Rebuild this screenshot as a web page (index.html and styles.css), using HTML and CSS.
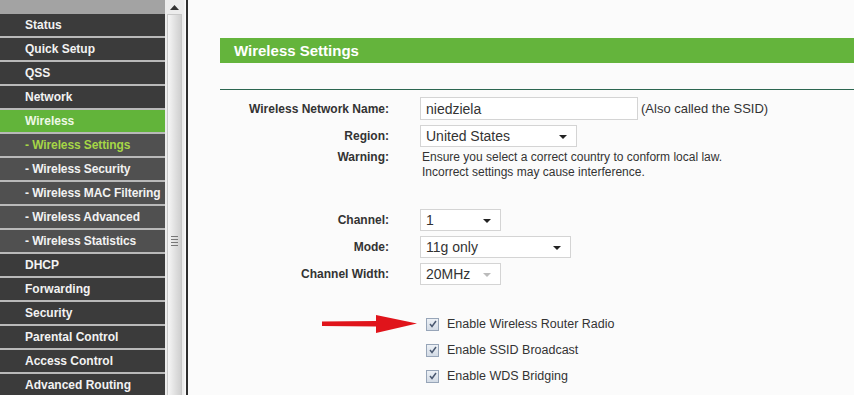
FILE: index.html
```html
<!DOCTYPE html>
<html lang="en">
<head>
  <meta charset="UTF-8">
  <title>Wireless Settings</title>
  <link rel="stylesheet" href="styles.css">
</head>
<body>
  <div class="page">
    <nav class="menu">
      <div class="menu-top"></div>
      <a class="item">Status</a>
      <a class="item">Quick Setup</a>
      <a class="item">QSS</a>
      <a class="item">Network</a>
      <a class="item active">Wireless</a>
      <a class="item sub current">- Wireless Settings</a>
      <a class="item sub">- Wireless Security</a>
      <a class="item sub">- Wireless MAC Filtering</a>
      <a class="item sub">- Wireless Advanced</a>
      <a class="item sub">- Wireless Statistics</a>
      <a class="item">DHCP</a>
      <a class="item">Forwarding</a>
      <a class="item">Security</a>
      <a class="item">Parental Control</a>
      <a class="item">Access Control</a>
      <a class="item">Advanced Routing</a>
    </nav>
    <div class="scroll">
      <div class="scroll-up">
        <svg width="9" height="5" viewBox="0 0 9 5"><path d="M0 5 L4.5 0 L9 5 Z" fill="#333"/></svg>
      </div>
      <div class="scroll-thumb">
        <div class="grip"><i></i><i></i><i></i><i></i></div>
      </div>
    </div>
    <div class="divider"></div>
    <main class="content">
      <h2 class="title">Wireless Settings</h2>
      <div class="rule"></div>
      <form class="settings">
        <div class="row">
          <label class="lbl">Wireless Network Name:</label>
          <div class="field">
            <input class="text" type="text" value="niedziela">
            <span class="note">(Also called the SSID)</span>
          </div>
        </div>
        <div class="row">
          <label class="lbl">Region:</label>
          <div class="field">
            <span class="sel w-region">United States<b class="arrow"></b></span>
          </div>
        </div>
        <div class="row warn">
          <label class="lbl">Warning:</label>
          <div class="warn-text">Ensure you select a correct country to conform local law.<br>Incorrect settings may cause interference.</div>
        </div>
        <div class="row gap">
          <label class="lbl">Channel:</label>
          <div class="field"><span class="sel w-small">1<b class="arrow"></b></span></div>
        </div>
        <div class="row">
          <label class="lbl">Mode:</label>
          <div class="field"><span class="sel w-mode">11g only<b class="arrow"></b></span></div>
        </div>
        <div class="row">
          <label class="lbl">Channel Width:</label>
          <div class="field"><span class="sel w-small disabled">20MHz<b class="arrow"></b></span></div>
        </div>
        <div class="checks">
          <div class="check-row">
            <span class="box"><svg width="10" height="10" viewBox="0 0 10 10"><path d="M2 5 L4 7.5 L8 2" fill="none" stroke="#4a5870" stroke-width="1.5"/></svg></span>
            Enable Wireless Router Radio
          </div>
          <div class="check-row">
            <span class="box"><svg width="10" height="10" viewBox="0 0 10 10"><path d="M2 5 L4 7.5 L8 2" fill="none" stroke="#4a5870" stroke-width="1.5"/></svg></span>
            Enable SSID Broadcast
          </div>
          <div class="check-row">
            <span class="box"><svg width="10" height="10" viewBox="0 0 10 10"><path d="M2 5 L4 7.5 L8 2" fill="none" stroke="#4a5870" stroke-width="1.5"/></svg></span>
            Enable WDS Bridging
          </div>
          <svg class="red-arrow" width="96" height="20" viewBox="0 0 96 20">
            <path d="M0 7.5 L54 7 L54 1 L95 9.5 L54 19 L54 12.5 L0 12 Z" fill="#e0141b"/>
          </svg>
        </div>
      </form>
    </main>
  </div>
</body>
</html>
```
FILE: styles.css
```css
html, body { margin:0; height:395px; overflow:hidden; }
body { font-family:"Liberation Sans", Arial, sans-serif; background:#fbfbfb; color:#333; }
.page { display:flex; height:395px; }

.menu { width:165px; flex:none; background:#3b3b3b; display:flex; flex-direction:column; overflow:hidden; }
.menu-top { height:14px; flex:none; background:#a3a3a3; }
.item { flex:none; display:block; height:22px; line-height:22px; padding-left:25px; border-bottom:2px solid #b9b9b9; color:#f2f2f2; font-size:12px; font-weight:bold; white-space:nowrap; background:#3b3b3b; }
.item.active { background:#62b43a; color:#eef8e6; }
.item.sub { background:#505050; letter-spacing:-0.1px; }
.item.current { color:#a6d646; }

.scroll { width:19px; flex:none; background:#ececec; display:flex; flex-direction:column; border-right:1px solid #f4f4f4; }
.scroll-up { height:14px; flex:none; display:flex; align-items:center; justify-content:center; }
.scroll-thumb { flex:1; margin:0 2px; background:linear-gradient(to right, #f6f6f6, #dedede 60%, #cfcfcf); border:1px solid #c8c8c8; border-bottom:none; display:flex; align-items:flex-start; justify-content:center; }
.grip { display:flex; flex-direction:column; gap:2px; margin-top:221px; }
.grip i { display:block; width:7px; height:1px; background:#777; }
.divider { width:2px; flex:none; background:#2f2f2f; margin-left:1px; }

.content { flex:1; padding:38px 0 0 32px; }
.title { margin:0; height:25px; line-height:25px; padding-left:14px; background:#64b43c; color:#fff; font-size:15px; font-weight:bold; }
.rule { margin-top:26px; height:1px; background:#2c6650; }

.settings { padding-top:5px; }
.row { display:flex; align-items:center; height:27px; }
.lbl { width:169px; margin-right:31px; text-align:right; font-size:12px; font-weight:bold; color:#333; flex:none; }
.field { display:flex; align-items:center; }
.text { box-sizing:border-box; width:218px; height:23px; border:1px solid #d4d4d4; background:#fff; padding:0 5px; font-family:"Liberation Sans", Arial, sans-serif; font-size:14px; color:#333; }
.note { margin-left:3px; font-size:13px; color:#333; }
.sel { position:relative; box-sizing:border-box; display:inline-block; height:22px; line-height:20px; border:1px solid #d4d4d4; background:#fff; padding-left:5px; font-size:14px; color:#333; }
.w-region { width:157px; }
.w-small { width:81px; }
.w-mode { width:151px; }
.arrow { position:absolute; right:9px; top:9px; width:0; height:0; border-left:4px solid transparent; border-right:4px solid transparent; border-top:4px solid #222; }
.disabled .arrow { border-top-color:#bbb; }

.row.warn { height:auto; align-items:flex-start; padding-top:1px; }
.warn .lbl { line-height:15px; }
.warn-text { font-size:12px; line-height:15px; padding-left:2px; color:#333; }
.row.gap { margin-top:26px; }

.checks { position:relative; margin-top:24px; padding-left:206px; }
.check-row { display:flex; align-items:center; height:26px; font-size:12.5px; color:#333; }
.box { box-sizing:border-box; width:13px; height:13px; margin-right:8px; border:1px solid #97a5b8; background:linear-gradient(#edf1f6, #d3dbe5); display:flex; align-items:center; justify-content:center; }
.red-arrow { position:absolute; left:102px; top:3px; }
```
